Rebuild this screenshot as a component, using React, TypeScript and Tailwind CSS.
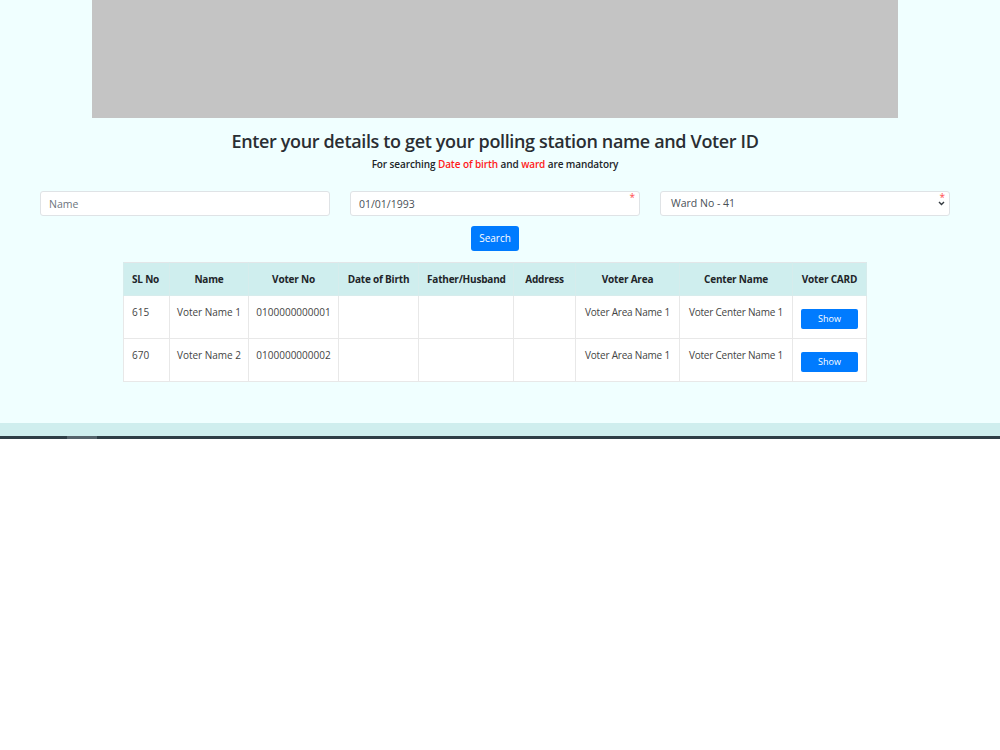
import React from 'react';

type Row = {
  sl: string;
  name: string;
  voterNo: string;
  area: string;
  center: string;
};

const rows: Row[] = [
  { sl: '615', name: 'Voter Name 1', voterNo: '0100000000001', area: 'Voter Area Name 1', center: 'Voter Center Name 1' },
  { sl: '670', name: 'Voter Name 2', voterNo: '0100000000002', area: 'Voter Area Name 1', center: 'Voter Center Name 1' },
];

const cols = [
  { label: 'SL No', w: 'w-[46px]', align: 'text-left' },
  { label: 'Name', w: 'w-[79px]', align: 'text-center' },
  { label: 'Voter No', w: 'w-[90px]', align: 'text-center' },
  { label: 'Date of Birth', w: 'w-[80px]', align: 'text-center' },
  { label: 'Father/Husband', w: 'w-[95px]', align: 'text-center' },
  { label: 'Address', w: 'w-[62px]', align: 'text-center' },
  { label: 'Voter Area', w: 'w-[104px]', align: 'text-center' },
  { label: 'Center Name', w: 'w-[113px]', align: 'text-center' },
  { label: 'Voter CARD', w: 'w-[74px]', align: 'text-center' },
];

const font = { fontFamily: '"Open Sans", "Noto Sans", Arial, sans-serif' };

const App: React.FC = () => {
  return (
    <div className="min-h-[750px] bg-white" style={font}>
      <div className="bg-[#f0ffff] h-[423px]">
        <div className="ml-[40px] w-[910px] flex flex-col items-center">
          {/* Banner placeholder */}
          <div className="w-[806px] h-[118px] bg-[#c4c4c4]" />

          <h1 className="mt-[10px] text-[18px] leading-[26px] font-semibold text-[#2a2e33] tracking-[-0.35px]">
            Enter your details to get your polling station name and Voter ID
          </h1>
          <p className="mt-[2px] text-[10px] leading-[16px] font-semibold text-[#212529] tracking-[-0.1px]">
            For searching <span className="text-[#ff1a1a]">Date of birth</span> and{' '}
            <span className="text-[#ff1a1a]">ward</span> are mandatory
          </p>

          {/* Search form */}
          <div className="mt-[19px] w-full grid grid-cols-3 gap-[20px]">
            <input
              type="text"
              placeholder="Name"
              className="block h-[25px] w-full px-[8px] text-[10.5px] bg-white border border-[#dfe3e6] rounded-[3px] text-[#495057] placeholder:text-[#6c757d] outline-none"
            />
            <div className="relative">
              <input
                type="text"
                defaultValue="01/01/1993"
                className="block h-[25px] w-full px-[8px] text-[10.5px] bg-white border border-[#dfe3e6] rounded-[3px] text-[#495057] outline-none"
              />
              <span className="absolute right-[5px] top-[1px] text-[10px] leading-[10px] text-[#ff4d4d]">*</span>
            </div>
            <div className="relative">
              <div className="h-[25px] w-full pl-[10px] flex items-center text-[10.5px] bg-white border border-[#dfe3e6] rounded-[3px] text-[#495057]">
                Ward No - 41
              </div>
              <span className="absolute right-[5px] top-[1px] text-[10px] leading-[10px] text-[#ff4d4d]">*</span>
              <svg
                className="absolute right-[5px] top-[10px]"
                width="7"
                height="5"
                viewBox="0 0 7 5"
                fill="none"
              >
                <path d="M1 1l2.5 2.5L6 1" stroke="#343a40" strokeWidth="1.4" />
              </svg>
            </div>
          </div>

          <button className="mt-[10px] h-[25px] px-[8px] bg-[#007bff] text-white text-[10px] rounded-[3px]">
            Search
          </button>

          {/* Results */}
          <table className="mt-[11px] w-[743px] table-fixed border border-[#e3e6e8] border-collapse text-[10px] text-[#212529]">
            <thead>
              <tr className="bg-[#cfeeee] h-[33px]">
                {cols.map((c) => (
                  <th
                    key={c.label}
                    className={`${c.w} ${c.align} px-[8px] font-bold border-b border-x border-[#d6ecec] whitespace-nowrap tracking-[-0.2px]`}
                  >
                    {c.label}
                  </th>
                ))}
              </tr>
            </thead>
            <tbody>
              {rows.map((r) => (
                <tr key={r.sl} className="bg-white h-[43px]">
                  <td className="align-top pt-[9px] px-[8px] border border-[#e8e8e8] text-[#444]">{r.sl}</td>
                  <td className="align-top pt-[9px] px-[2px] border border-[#e8e8e8] text-[#444] text-center whitespace-nowrap">{r.name}</td>
                  <td className="align-top pt-[9px] px-[2px] border border-[#e8e8e8] text-[#444] text-center">{r.voterNo}</td>
                  <td className="border border-[#e8e8e8]" />
                  <td className="border border-[#e8e8e8]" />
                  <td className="border border-[#e8e8e8]" />
                  <td className="align-top pt-[9px] px-[2px] border border-[#e8e8e8] text-[#444] text-center whitespace-nowrap tracking-[-0.2px]">{r.area}</td>
                  <td className="align-top pt-[9px] px-[2px] border border-[#e8e8e8] text-[#444] text-center whitespace-nowrap tracking-[-0.2px]">{r.center}</td>
                  <td className="px-[8px] border border-[#e8e8e8] text-center align-middle">
                    <button className="mt-[4px] w-[57px] h-[20px] bg-[#007bff] text-white text-[9px] rounded-[2px]">
                      Show
                    </button>
                  </td>
                </tr>
              ))}
            </tbody>
          </table>
        </div>
      </div>

      {/* Footer strip */}
      <div className="h-[13px] bg-[#cfeeee]" />
      <div className="h-[3px] bg-[#2e3d45] flex">
        <div className="ml-[67px] w-[30px] bg-[#55636b]" />
      </div>
    </div>
  );
};

export default App;
